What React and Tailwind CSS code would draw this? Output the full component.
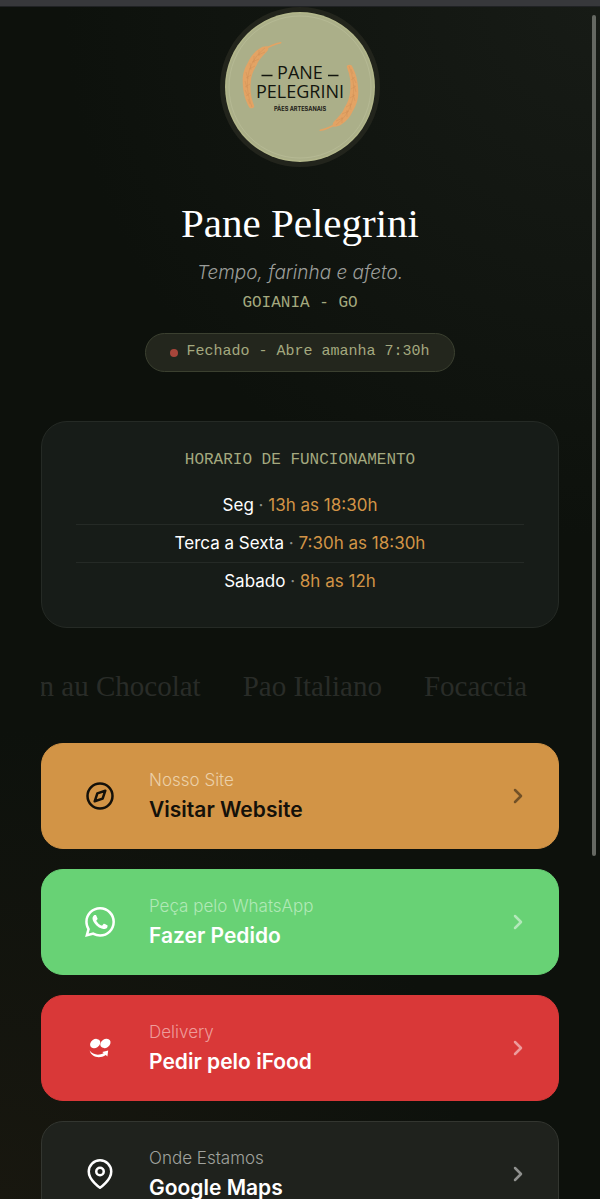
import React from 'react';
import { SiWhatsapp } from 'react-icons/si';

const hours = [
  { day: 'Seg', time: '13h as 18:30h' },
  { day: 'Terca a Sexta', time: '7:30h as 18:30h' },
  { day: 'Sabado', time: '8h as 12h' },
];

function CompassIcon() {
  return (
    <svg className="size-[30px]" viewBox="0 0 24 24" fill="none" stroke="currentColor" strokeWidth="2" strokeLinecap="round" strokeLinejoin="round" aria-hidden="true">
      <circle cx="12" cy="12" r="10" />
      <polygon points="16.24 7.76 14.12 14.12 7.76 16.24 9.88 9.88" />
    </svg>
  );
}

function PinIcon() {
  return (
    <svg className="size-[30px]" viewBox="0 0 24 24" fill="none" stroke="currentColor" strokeWidth="2" strokeLinecap="round" strokeLinejoin="round" aria-hidden="true">
      <path d="M21 10c0 7-9 13-9 13s-9-6-9-13a9 9 0 0 1 18 0z" />
      <circle cx="12" cy="10" r="3" />
    </svg>
  );
}

function IfoodIcon() {
  return (
    <svg className="size-[30px]" viewBox="0 0 30 30" fill="currentColor" aria-hidden="true">
      <ellipse cx="10.2" cy="10.6" rx="5.5" ry="4.3" transform="rotate(-35 10.2 10.6)" />
      <ellipse cx="20.4" cy="10.4" rx="5.5" ry="4.3" transform="rotate(-35 20.4 10.4)" />
      <path d="M4.600 17.600C7.500 21.800 13.500 22.800 18.700 20.300L17.300 19L23.200 17.400L22.400 23.600L20.800 22.100C14.500 26.200 6.500 24.400 4.600 17.600z" />
    </svg>
  );
}

function Chevron() {
  return (
    <svg className="size-6 shrink-0 opacity-50" viewBox="0 0 24 24" fill="none" stroke="currentColor" strokeWidth="2.5" strokeLinecap="round" strokeLinejoin="round" aria-hidden="true">
      <path d="m9 18 6-6-6-6" />
    </svg>
  );
}

const links = [
  { small: 'Nosso Site', big: 'Visitar Website', icon: <CompassIcon />, tone: 'border-[#d29446] bg-[#d29446] text-[#14110a]', smallTone: 'text-[#ecd0a8]' },
  { small: 'Peça pelo WhatsApp', big: 'Fazer Pedido', icon: <SiWhatsapp className="size-[30px]" aria-hidden="true" />, tone: 'border-[#68d275] bg-[#68d275] text-white', smallTone: 'text-[#b1e9b7]' },
  { small: 'Delivery', big: 'Pedir pelo iFood', icon: <IfoodIcon />, tone: 'border-[#d93838] bg-[#d93838] text-white', smallTone: 'text-[#ee9c9a]' },
  { small: 'Onde Estamos', big: 'Google Maps', icon: <PinIcon />, tone: 'border-[#333630] bg-[#1f221d] text-white', smallTone: 'text-[#a0a29e]' },
];

function Wheat() {
  return (
    <g>
      <path d="M42.700 34.500C40 34 37 35 35 36.300C29 40 25.500 44.500 23.300 49.700C19 57 17.700 62 17.700 69C17.700 79 20 88 24.300 95.500C26 97 29 96.500 29.300 94.200C26 86 25 79 25.700 71.300C26 64 28 59 31.700 53C34 47 39 43 42.700 38.500C43.500 37 43.500 35.500 42.700 34.500z" fill="#e3a364" />
      <path d="M41 36C47 34 50 31.500 55.700 30.700" fill="none" stroke="#e3a364" strokeWidth="1.600" strokeLinecap="round" />
      <path d="M40 36C22 50 18 72 27 95M34 38l0 6M29 44l0 7M25 51l1 7M21 60l2 7M20 69l2 7M20 78l3 6M23 87l2 5M40 40l-7 3M34 47l-7 3M30 54l-6 3M26 63l-5 3M25 72l-5 3M25 81l-4 3" fill="none" stroke="#ca8950" strokeWidth="0.6" opacity="0.6" />
    </g>
  );
}

function Logo() {
  return (
    <svg className="size-[150px]" viewBox="0 0 150 150" role="img" aria-label="Pane Pelegrini">
      <circle cx="75" cy="75" r="75" fill="#b3b78b" />
      <circle cx="75" cy="75" r="73.500" fill="#abaf89" />
      <circle cx="75" cy="75" r="71" fill="none" stroke="#bcc09b" strokeWidth="0.6" />
      <Wheat />
      <g transform="rotate(180 75.5 74.5)">
        <Wheat />
      </g>
      <path d="M36.500 63.500h11M103 63.500h10.500" stroke="#12150e" strokeWidth="1.400" />
      <text x="75" y="66.500" textAnchor="middle" fontFamily="'Open Sans', sans-serif" fontSize="18" fill="#12150e">PANE</text>
      <text x="75" y="85.500" textAnchor="middle" fontFamily="'Open Sans', sans-serif" fontSize="18" fill="#12150e">PELEGRINI</text>
      <text x="75" y="98.500" textAnchor="middle" fontFamily="Inter, sans-serif" fontSize="5.6" fontWeight="700" fill="#1d2018">PÃES ARTESANAIS</text>
    </svg>
  );
}

export default function App() {
  return (
    <div className="relative flex h-screen flex-col overflow-hidden bg-[#0d110c] bg-[radial-gradient(circle_at_100%_0%,#171b16_0%,transparent_40%),radial-gradient(circle_at_0%_100%,#18170f_0%,transparent_35%)] font-['Inter',sans-serif] text-white">
      <div className="h-[7px] shrink-0 border-b border-[#202224] bg-[#37383b]" />

      <main className="flex shrink-0 flex-col px-[41px]">
        <header className="flex flex-col items-center">
          <div className="rounded-full border-[5px] border-[#22241c]">
            <Logo />
          </div>
          <h1 className="mt-7 font-['Liberation_Serif',serif] text-[41px] leading-[56px]">Pane Pelegrini</h1>
          <p className="mt-2 text-[19px] leading-7 font-light text-[#9b9d99] italic">Tempo, farinha e afeto.</p>
          <p className="mt-1 font-['Liberation_Mono',monospace] text-base leading-6 text-[#a4a97f]">GOIANIA - GO</p>
          <p className="mt-[18px] flex h-[39px] items-center gap-2 rounded-full border border-[#3b4030] bg-[#23261d] px-6 font-['Liberation_Mono',monospace] text-[15px] text-[#a4a97f]">
            <span className="size-2 rounded-full bg-[#a8463b]" />
            Fechado - Abre amanha 7:30h
          </p>
        </header>

        <section className="mt-[49px] rounded-[26px] border border-[#252a25] bg-[#171c18] px-[34px] pt-[26px] pb-[27px] text-center">
          <h2 className="mb-[15px] font-['Liberation_Mono',monospace] text-base leading-6 text-[#a4a97f]">HORARIO DE FUNCIONAMENTO</h2>
          <ul className="divide-y divide-[#252a26] text-[17px] leading-[37px]">
            {hours.map(({ day, time }) => (
              <li key={day}>
                {day} <span className="text-[#8c8f8b]">·</span> <span className="text-[#d29446]">{time}</span>
              </li>
            ))}
          </ul>
        </section>

        <div className="mt-[38px] flex justify-end gap-[42px] overflow-hidden pr-8 font-['Liberation_Serif',serif] text-[29px] leading-10 whitespace-nowrap text-[#292c28]">
          <span>Pain au Chocolat</span>
          <span>Pao Italiano</span>
          <span>Focaccia</span>
        </div>

        <nav className="mt-[37px] flex flex-col gap-5">
          {links.map(({ small, big, icon, tone, smallTone }) => (
            <a key={big} href="#" className={`flex h-[106px] items-center rounded-[22px] border pr-7 pl-[43px] ${tone}`}>
              {icon}
              <span className="ml-[34px] flex grow flex-col">
                <span className={`text-[17px] leading-7 font-light ${smallTone}`}>{small}</span>
                <span className="text-[21px] leading-8 font-semibold">{big}</span>
              </span>
              <Chevron />
            </a>
          ))}
        </nav>
      </main>

      <div className="absolute top-[15px] right-1 h-[841px] w-1 rounded-full bg-[#656862]" />
    </div>
  );
}
